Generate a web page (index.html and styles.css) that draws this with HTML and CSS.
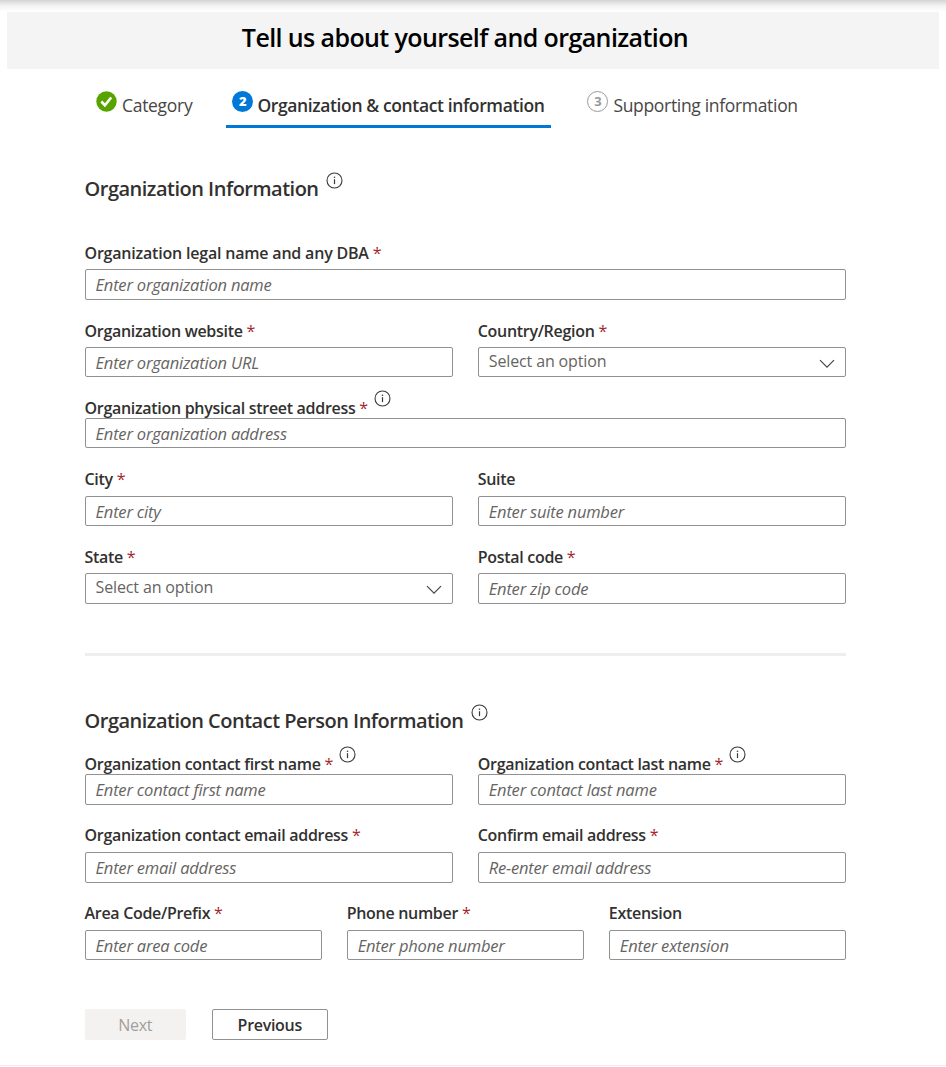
FILE: index.html
```
<!DOCTYPE html>
<html lang="en">
<head>
<meta charset="utf-8">
<title>Tell us about yourself and organization</title>
<link rel="stylesheet" href="styles.css">
</head>
<body>
<svg width="0" height="0" class="defs" aria-hidden="true">
  <symbol id="info" viewBox="0 0 17 17">
    <circle cx="8.5" cy="8.5" r="7.5" fill="none" stroke="#3b3a39" stroke-width="1.1"/>
    <path d="M8.5 7.2v4.9" stroke="#3b3a39" stroke-width="1.2"/>
    <circle cx="8.5" cy="5.2" r=".8" fill="#3b3a39"/>
  </symbol>
  <symbol id="chevron" viewBox="0 0 16 10">
    <path d="M1 1.2l7 7 7-7" fill="none" stroke="#484644" stroke-width="1.2"/>
  </symbol>
</svg>
<div class="page">
  <header class="banner"><h1>Tell us about yourself and organization</h1></header>
  <nav class="steps">
    <div class="step done">
      <svg class="badge" viewBox="0 0 21 21"><circle cx="10.5" cy="10.5" r="10.2" fill="#57a300"/><path d="M5.3 10.5l3.6 3.7 6.3-7.7" fill="none" stroke="#fff" stroke-width="2.6"/></svg>
      <span>Category</span>
    </div>
    <div class="step current"><b class="badge num">2</b><span>Organization &amp; contact information</span></div>
    <div class="step next"><b class="badge num outline">3</b><span>Supporting information</span></div>
  </nav>
  <main class="form">
    <h2 class="first">Organization Information<svg class="info"><use href="#info"/></svg></h2>
    <div class="row">
      <div class="field"><label class="wide">Organization legal name and any DBA <i>*</i></label><div class="input">Enter organization name</div></div>
    </div>
    <div class="row">
      <div class="field"><label>Organization website <i>*</i></label><div class="input">Enter organization URL</div></div>
      <div class="field"><label>Country/Region <i>*</i></label><div class="input select">Select an option<svg class="chevron"><use href="#chevron"/></svg></div></div>
    </div>
    <div class="row">
      <div class="field tight"><label>Organization physical street address <i>*</i><svg class="info"><use href="#info"/></svg></label><div class="input">Enter organization address</div></div>
    </div>
    <div class="row snug">
      <div class="field"><label>City <i>*</i></label><div class="input">Enter city</div></div>
      <div class="field"><label>Suite</label><div class="input">Enter suite number</div></div>
    </div>
    <div class="row">
      <div class="field"><label>State <i>*</i></label><div class="input select">Select an option<svg class="chevron"><use href="#chevron"/></svg></div></div>
      <div class="field"><label>Postal code <i>*</i></label><div class="input">Enter zip code</div></div>
    </div>
    <hr>
    <h2 class="second">Organization Contact Person Information<svg class="info"><use href="#info"/></svg></h2>
    <div class="row">
      <div class="field tight"><label>Organization contact first name <i>*</i><svg class="info"><use href="#info"/></svg></label><div class="input">Enter contact first name</div></div>
      <div class="field tight"><label>Organization contact last name <i>*</i><svg class="info"><use href="#info"/></svg></label><div class="input">Enter contact last name</div></div>
    </div>
    <div class="row snug">
      <div class="field"><label>Organization contact email address <i>*</i></label><div class="input">Enter email address</div></div>
      <div class="field"><label>Confirm email address <i>*</i></label><div class="input">Re-enter email address</div></div>
    </div>
    <div class="row snug">
      <div class="field"><label>Area Code/Prefix <i>*</i></label><div class="input">Enter area code</div></div>
      <div class="field"><label>Phone number <i>*</i></label><div class="input">Enter phone number</div></div>
      <div class="field"><label>Extension</label><div class="input">Enter extension</div></div>
    </div>
    <div class="actions"><button class="btn-next" disabled>Next</button><button class="btn-prev">Previous</button></div>
  </main>
</div>
</body>
</html>
```
FILE: styles.css
```
* { box-sizing: border-box; }
body { margin: 0; background: #fff; color: #323130; font-family: "Open Sans", "Noto Sans", sans-serif; overflow: hidden; }
.defs { display: block; height: 0; }
.page { height: 1066px; padding: 12px 7px 0; border-bottom: 1px solid #ededed; background: linear-gradient(#d4d4d4, #f4f4f4 6px, #fff 12px) top / 100% 12px no-repeat; }
.banner { height: 57px; background: #f4f4f4; padding-right: 16px; text-align: center; }
h1 { margin: 0; font-size: 25px; line-height: 50px; font-weight: 600; color: #000; letter-spacing: -.6px; }
.steps { display: flex; height: 59px; padding: 17px 0 0 83px; font-size: 17.5px; line-height: 38px; white-space: nowrap; }
.step { display: flex; height: 42px; padding: 0 6px; letter-spacing: -.3px; color: #484644; }
.badge { width: 21px; height: 21px; margin: 5px 5px 0 0; flex: none; }
.num { border-radius: 50%; background: #0078d7; color: #fff; font-size: 13px; line-height: 21px; text-align: center; letter-spacing: 0; }
.outline { background: none; color: #999; border: 1.6px solid #999; line-height: 19px; }
.current { width: 325px; margin-left: 28px; border-bottom: 3px solid #0078d7; color: #323130; font-weight: 600; letter-spacing: -.38px; }
.current .badge { margin-right: 4px; }
.next { margin-left: 30px; letter-spacing: -.32px; }
.form { width: 761.5px; margin-left: 77.5px; }
h2 { margin: 0; font-size: 20px; line-height: 28px; font-weight: 600; letter-spacing: -.5px; white-space: nowrap; }
.info { width: 17px; height: 17px; margin: -12px 0 0 6px; vertical-align: 7px; }
h2 .info { margin-left: 7.5px; }
.first { height: 66px; margin-top: 47px; }
.row { display: grid; grid-auto-flow: column; grid-auto-columns: minmax(0, 1fr); column-gap: 25px; margin-bottom: 19.3px; }
label { display: block; height: 28px; font-size: 16px; line-height: 24.4px; font-weight: 600; letter-spacing: -.3px; white-space: nowrap; }
.snug label { line-height: 23.5px; }
.wide { letter-spacing: -.2px; }
label i { color: #a4262c; font-style: normal; font-weight: 400; }
.tight label { height: 21.3px; line-height: 22px; }
.input { display: flex; height: 30.5px; border: 1px solid #919191; border-radius: 2px; background: #fff; padding: 0 10px; font-size: 16.5px; line-height: 29.3px; font-style: italic; color: #666462; letter-spacing: -.2px; white-space: nowrap; }
.select { justify-content: space-between; font-size: 16px; font-style: normal; line-height: 27.8px; letter-spacing: -.13px; }
.chevron { width: 16px; height: 10px; margin-top: 11px; }
hr { height: 3px; margin: 49.5px 0 0; border: 0; background: #eee; }
.second { height: 46px; margin-top: 50.5px; }
.actions { display: flex; gap: 25.5px; margin-top: 48.7px; }
button { height: 31px; padding: 1px 0 0; border-radius: 2px; font: 600 16px/29px "Open Sans", sans-serif; letter-spacing: -.3px; }
.btn-next { width: 101.5px; border: 0; background: #f3f2f1; color: #a19f9d; font-weight: 400; }
.btn-prev { width: 116.5px; border: 1px solid #919191; background: #fff; color: #323130; }
```
